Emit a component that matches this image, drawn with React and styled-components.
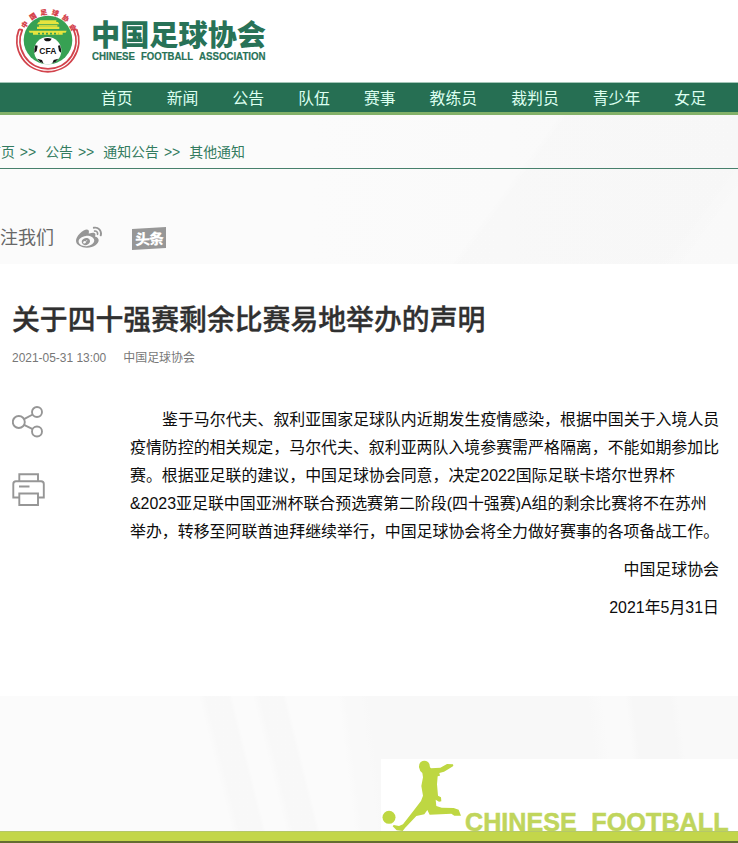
import React from 'react';
import styled, { createGlobalStyle } from 'styled-components';
import { FaWeibo } from 'react-icons/fa';

const sans = '"Liberation Sans", "Noto Sans CJK SC", sans-serif';

const GlobalStyle = createGlobalStyle`
  * { box-sizing: border-box; }
  body { margin: 0; background: #fff; font-family: ${sans}; overflow: hidden; }
  svg { display: block; }
`;

const Page = styled.div`
  width: 738px;
  height: 843px;
  display: flex;
  flex-direction: column;
  overflow: hidden;
  background: #fff;
`;

const Header = styled.header`
  height: 83px;
  flex: none;
  display: flex;
  padding: 6px 0 0 13px;
  gap: 9px;
`;

const Nav = styled.nav`
  height: 32px;
  flex: none;
  display: flex;
  gap: 34px;
  padding-left: 101px;
  background: #266f53;
  border-bottom: 3px solid #83b169;
  box-shadow: 0 -1px 0 #a3c6b8;
`;

const NavItem = styled.a`
  font: 15.86px/30px "Noto Sans CJK SC", sans-serif;
  color: #dcfff0;
  white-space: nowrap;
`;

const Breadcrumb = styled.div`
  height: 53px;
  flex: none;
  display: flex;
  align-items: flex-start;
  padding-top: 27px;
  margin-left: -13px;
  color: #337b60;
  font-size: 13.93px;
  line-height: 20px;
  white-space: nowrap;
`;

const CrumbArrow = styled.span`
  margin: 0 9px 0 5px;
`;

const TopBand = styled.section`
  height: 149px;
  flex: none;
  background:
    linear-gradient(126deg, transparent 66%, rgba(0, 0, 0, 0.008) 67%, rgba(0, 0, 0, 0.008) 91%, transparent 94%),
    linear-gradient(90deg, #fbfbfb 0 42%, #fafafa 68%, #f9f9f9);
`;

const Follow = styled.div`
  height: 96px;
  border-top: 1px solid #47806c;
  display: flex;
  align-items: flex-start;
  padding-top: 54px;
`;

const FollowLabel = styled.span`
  margin-left: -18px;
  width: 72px;
  font-size: 18px;
  line-height: 30px;
  color: #686868;
  white-space: nowrap;
`;

const WeiboIcon = styled(FaWeibo)`
  width: 26px;
  height: 26px;
  margin: 2px 0 0 22px;
  color: #969696;
`;

const ToutiaoIcon = styled.svg`
  margin: 4px 0 0 30px;
`;

const Article = styled.article`
  height: 432px;
  flex: none;
  padding: 34px 0 0 12px;
`;

const Title = styled.h1`
  margin: 0;
  font: 500 27.85px/40px "Noto Sans CJK SC", sans-serif;
  -webkit-text-stroke: 0.35px #303030;
  color: #303030;
  white-space: nowrap;
`;

const Meta = styled.div`
  display: flex;
  gap: 17px;
  margin-top: 10px;
  font-size: 11.95px;
  line-height: 20px;
  color: #777;
`;

const Content = styled.div`
  display: flex;
  margin-top: 37px;
`;

const Tools = styled.div`
  width: 118px;
  flex: none;
  display: flex;
  flex-direction: column;
  gap: 34px;
`;

const Copy = styled.div`
  width: 589px;
  padding-top: 1px;
  font-size: 15.93px;
  line-height: 28px;
  color: #0c0c0c;
`;

const Line = styled.div`
  white-space: nowrap;
  padding-left: ${(p) => (p.$indent ? '32px' : '0')};
`;

const Signature = styled.div`
  margin-top: 10px;
  text-align: right;
`;

const Footer = styled.footer`
  height: 147px;
  flex: none;
  display: flex;
  flex-direction: column;
`;

const FooterBand = styled.div`
  height: 135px;
  display: flex;
  justify-content: flex-end;
  align-items: flex-end;
  background:
    linear-gradient(76deg, transparent 30%, rgba(0, 0, 0, 0.01) 31% 34%, transparent 34.5% 37%, rgba(0, 0, 0, 0.01) 38% 41%, transparent 41.5%),
    linear-gradient(83deg, #fbfbfb 0 47%, #f9f9f9 48% 50%, #f8f8f8 51% 80%, #fafafa 82% 85%, #f7f7f7 86% 91%, #f9f9f9 92%);
`;

const Banner = styled.svg`
  background: #fff;
`;

const FooterBar = styled.div`
  height: 12px;
  background: #c3d64a;
  border-top: 1px solid #b5c769;
  border-bottom: 2px solid #646d31;
`;

const Emblem = () => (
  <svg width="70" height="67" viewBox="39 18 210 201">
    <defs>
      <path id="arc" d="M73 92 A76 76 0 0 1 215 92" />
    </defs>
    <g fill="none" stroke="#d2434c" strokeWidth="5.5">
      <path d="M57 88 A93 93 0 1 0 230 88" />
      <path d="M67 89 A84 84 0 1 0 221 89" />
      <path d="M57 88 L68 90 M230 88 L220 90" />
    </g>
    <circle cx="144" cy="120" r="73" fill="#37a153" />
    <text fontFamily='"Noto Sans CJK SC", sans-serif' fontWeight="900" fontSize="20" fill="#d33b46" stroke="#d33b46" strokeWidth="0.6">
      <textPath href="#arc" startOffset="6" textLength="180">中国足球协会</textPath>
    </text>
    <g fill="#e6e43e">
      <path d="M119 61 H169 V66 H174 L178 73 H111 L116 66 H119Z" />
      <path d="M117 75 H172 V80 H178 V87 H111 V80 H117Z" />
      <path d="M86 92 H200 L197 98 H188 V104 H99 V98 H89Z" />
    </g>
    <path d="M114 101 H175" stroke="#37a153" strokeWidth="5" strokeDasharray="6 6" />
    <path d="M115 78 H175" stroke="#8ebf45" strokeWidth="2" />
    <circle cx="143" cy="152" r="41" fill="#fff" />
    <g fill="#151515">
      <path d="M131 116 Q143 112 155 116 L151 122 Q143 126 135 122Z" />
      <path d="M106 136 L113 137 L110 153 L103 159 Q102 146 106 136Z" />
      <path d="M180 136 L174 137 L177 153 L183 158 Q184 146 180 136Z" />
      <path d="M111 176 L126 180 L130 190 Q118 186 111 176Z" />
      <path d="M175 176 L161 180 L157 190 Q169 186 175 176Z" />
    </g>
    <text x="118" y="163" textLength="51" lengthAdjust="spacingAndGlyphs" fontFamily="Liberation Sans, sans-serif" fontWeight="700" fontSize="25" fill="#151515">CFA</text>
  </svg>
);

const Wordmark = () => (
  <svg width="178" height="64" viewBox="0 0 178 64">
    <text x="-1" y="39.5" textLength="175" lengthAdjust="spacingAndGlyphs" fontFamily='"Noto Sans CJK SC", sans-serif' fontWeight="900" fontSize="29" fill="#287257">中国足球协会</text>
    <g fontFamily="Liberation Sans, sans-serif" fontWeight="700" fontSize="10.2" fill="#287257" stroke="#287257" strokeWidth="0.2">
      <text x="0" y="54" textLength="43" lengthAdjust="spacingAndGlyphs">CHINESE</text>
      <text x="49" y="54" textLength="52" lengthAdjust="spacingAndGlyphs">FOOTBALL</text>
      <text x="107" y="54" textLength="66.5" lengthAdjust="spacingAndGlyphs">ASSOCIATION</text>
    </g>
  </svg>
);

const ShareIcon = () => (
  <svg width="34" height="34" viewBox="0 0 34 34" fill="none" stroke="#969696" strokeWidth="1.9">
    <circle cx="6.8" cy="17" r="6" />
    <circle cx="25" cy="7" r="5" />
    <circle cx="25" cy="26.5" r="5" />
    <path d="M12 14.2 L20.7 9.5 M12 19.8 L20.7 24.2" />
  </svg>
);

const PrintIcon = () => (
  <svg width="34" height="34" viewBox="0 0 34 34" fill="none" stroke="#969696" strokeWidth="1.9">
    <path d="M7.3 8 V1.3 H26 V8" />
    <path d="M7 24.5 H1.3 V11 Q1.3 8.2 4 8.2 H29 Q31.8 8.2 31.8 11 V24.5 H26" />
    <path d="M7.3 20.5 H26 V32 H7.3Z M7 13.5 H17.5" />
  </svg>
);

const FooterBanner = () => (
  <Banner width="357" height="72" viewBox="33 207 1071 216">
    <g fill="#bed742">
      <circle cx="57" cy="382" r="19.5" />
      <path d="M147 232 Q146 213 163 212 Q180 213 180 232 L183 235 L211 233 L231 222 L249 223 L250 228 L237 236 L222 245 L208 249 L210 257 L203 259 L201 283 L204 317 L213 322 L214 334 L207 335 L197 329 L199 348 L215 353 L251 354 L266 359 L273 377 L253 377 L244 371 L179 374 L172 360 L163 373 L139 378 L105 414 L98 423 L80 421 L68 409 L71 405 L87 408 L99 403 L130 363 L153 333 L159 317 L154 288 L159 262 L157 249 Q149 244 147 232Z" />
    </g>
    <g fontFamily="Liberation Sans, sans-serif" fontWeight="700" fontSize="75" fill="#c0d55c" stroke="#c0d55c" strokeWidth="1.5">
      <text x="285" y="422" textLength="335" lengthAdjust="spacingAndGlyphs">CHINESE</text>
      <text x="664" y="422" textLength="412" lengthAdjust="spacingAndGlyphs">FOOTBALL</text>
    </g>
  </Banner>
);

const navItems = ['首页', '新闻', '公告', '队伍', '赛事', '教练员', '裁判员', '青少年', '女足'];
const crumbs = ['首页', '公告', '通知公告', '其他通知'];
const lines = [
  '鉴于马尔代夫、叙利亚国家足球队内近期发生疫情感染,根据中国关于入境人员',
  '疫情防控的相关规定,马尔代夫、叙利亚两队入境参赛需严格隔离,不能如期参加比',
  '赛。根据亚足联的建议,中国足球协会同意,决定2022国际足联卡塔尔世界杯',
  '&2023亚足联中国亚洲杯联合预选赛第二阶段(四十强赛)A组的剩余比赛将不在苏州',
  '举办,转移至阿联酋迪拜继续举行,中国足球协会将全力做好赛事的各项备战工作。',
].map((line) => line.replace(/,/g, '\uff0c'));

export default function App() {
  return (
    <Page lang="zh-CN">
      <GlobalStyle />
      <Header>
        <Emblem />
        <Wordmark />
      </Header>
      <Nav>
        {navItems.map((item) => <NavItem key={item}>{item}</NavItem>)}
      </Nav>
      <TopBand>
        <Breadcrumb>
          {crumbs.map((crumb, i) => (
            <React.Fragment key={crumb}>
              {i > 0 && <CrumbArrow>&gt;&gt;</CrumbArrow>}
              <span>{crumb}</span>
            </React.Fragment>
          ))}
        </Breadcrumb>
        <Follow>
          <FollowLabel>关注我们</FollowLabel>
          <WeiboIcon />
          <ToutiaoIcon width="35" height="24" viewBox="0 0 35 24">
            <path d="M0 2 L34 0 V21 L0 23Z" fill="#979797" />
            <text x="3" y="17.5" textLength="29" transform="rotate(-2 17 12)" fontFamily='"Noto Sans CJK SC", sans-serif' fontWeight="900" fontSize="15" fill="#fff">头条</text>
          </ToutiaoIcon>
        </Follow>
      </TopBand>
      <Article>
        <Title>关于四十强赛剩余比赛易地举办的声明</Title>
        <Meta>
          <span>2021-05-31 13:00</span>
          <span>中国足球协会</span>
        </Meta>
        <Content>
          <Tools>
            <ShareIcon />
            <PrintIcon />
          </Tools>
          <Copy>
            {lines.map((line, i) => <Line key={line} $indent={i === 0}>{line}</Line>)}
            <Signature>中国足球协会</Signature>
            <Signature>2021年5月31日</Signature>
          </Copy>
        </Content>
      </Article>
      <Footer>
        <FooterBand>
          <FooterBanner />
        </FooterBand>
        <FooterBar />
      </Footer>
    </Page>
  );
}
